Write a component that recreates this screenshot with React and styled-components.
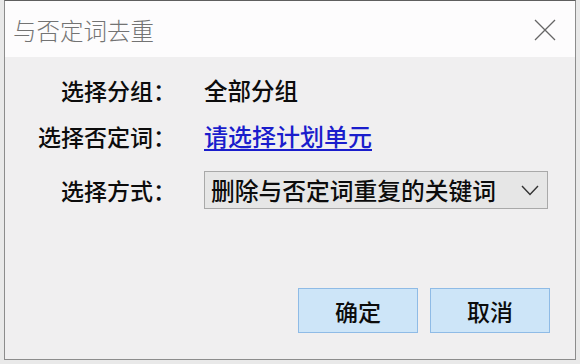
import React from 'react';
import styled, { createGlobalStyle } from 'styled-components';

const GlobalStyle = createGlobalStyle`
  html, body {
    margin: 0;
    padding: 0;
    background: #e9e9e9;
  }
  body {
    font-family: "Noto Sans CJK SC", "Microsoft YaHei", sans-serif;
  }
`

const Screen = styled.div`
  width: 580px;
  height: 364px;
  padding: 0 4px;
  box-sizing: border-box;
`

const Dialog = styled.div`
  width: 572px;
  height: 360px;
  box-sizing: border-box;
  border: 1px solid #8c8c8c;
  border-top-color: #5f5f5f;
  background: #f0eff0;
  display: flex;
  flex-direction: column;
`

const TitleBar = styled.div`
  height: 56px;
  flex: none;
  background: #fdfcfd;
  display: flex;
  align-items: center;
  justify-content: space-between;
  padding: 0 19px 0 8px;
`

const Title = styled.div`
  font-size: 23.5px;
  color: #737373;
  font-weight: 300;
  margin-top: 2px;
`

const CloseIcon = styled.svg`
  width: 22px;
  height: 22px;
  margin-top: 2px;
`

const Body = styled.div`
  flex: 1;
  display: flex;
  flex-direction: column;
  padding: 10px 25px 26px 0;
`

const Form = styled.div`
  display: grid;
  grid-template-columns: 171px 1fr;
  column-gap: 28px;
  align-items: center;
`

const Label = styled.div`
  font-size: 23px;
  font-weight: 500;
  color: #0c0c0c;
  text-align: right;
  height: ${props => props.height || 46}px;
  line-height: ${props => props.height || 46}px;
`

const Value = styled.div`
  font-size: 23.5px;
  font-weight: 500;
  color: #0c0c0c;
  height: ${props => props.height || 46}px;
  line-height: ${props => props.height || 46}px;
  display: flex;
  align-items: center;
`

const Link = styled.a`
  font-size: 24px;
  color: #1a1dcc;
  text-decoration: underline;
  text-underline-offset: 3px;
  cursor: pointer;
`

const Select = styled.div`
  width: 344px;
  height: 38px;
  box-sizing: border-box;
  border: 1px solid #a9a9a9;
  background: #e6e6e6;
  display: flex;
  align-items: center;
  justify-content: space-between;
  padding: 0 8px 0 6px;
  font-size: 23.75px;
  color: #0c0c0c;
`

const Chevron = styled.svg`
  width: 18px;
  height: 11px;
`

const Footer = styled.div`
  margin-top: auto;
  display: flex;
  justify-content: flex-end;
  gap: 12px;
`

const Button = styled.button`
  width: 120px;
  height: 45px;
  box-sizing: border-box;
  border: 1px solid #8fbbe6;
  background: #cde5f8;
  font-family: inherit;
  font-size: 23px;
  font-weight: 500;
  color: #0c0c0c;
  padding: 0;
  cursor: pointer;
`

const App = () => {
  return (
    <Screen>
      <GlobalStyle />
      <Dialog>
        <TitleBar>
          <Title>与否定词去重</Title>
          <CloseIcon viewBox="0 0 22 22">
            <path d="M1 1 L21 21 M21 1 L1 21" stroke="#666" strokeWidth="1.3" fill="none" />
          </CloseIcon>
        </TitleBar>
        <Body>
          <Form>
            <Label>选择分组：</Label>
            <Value>全部分组</Value>
            <Label>选择否定词：</Label>
            <Value><Link>请选择计划单元</Link></Value>
            <Label height={62}>选择方式：</Label>
            <Value height={62}>
              <Select>
                <span>删除与否定词重复的关键词</span>
                <Chevron viewBox="0 0 18 11">
                  <path d="M1 1 L9 9.5 L17 1" stroke="#333" strokeWidth="1.4" fill="none" />
                </Chevron>
              </Select>
            </Value>
          </Form>
          <Footer>
            <Button>确定</Button>
            <Button>取消</Button>
          </Footer>
        </Body>
      </Dialog>
    </Screen>
  );
}

export default App;
